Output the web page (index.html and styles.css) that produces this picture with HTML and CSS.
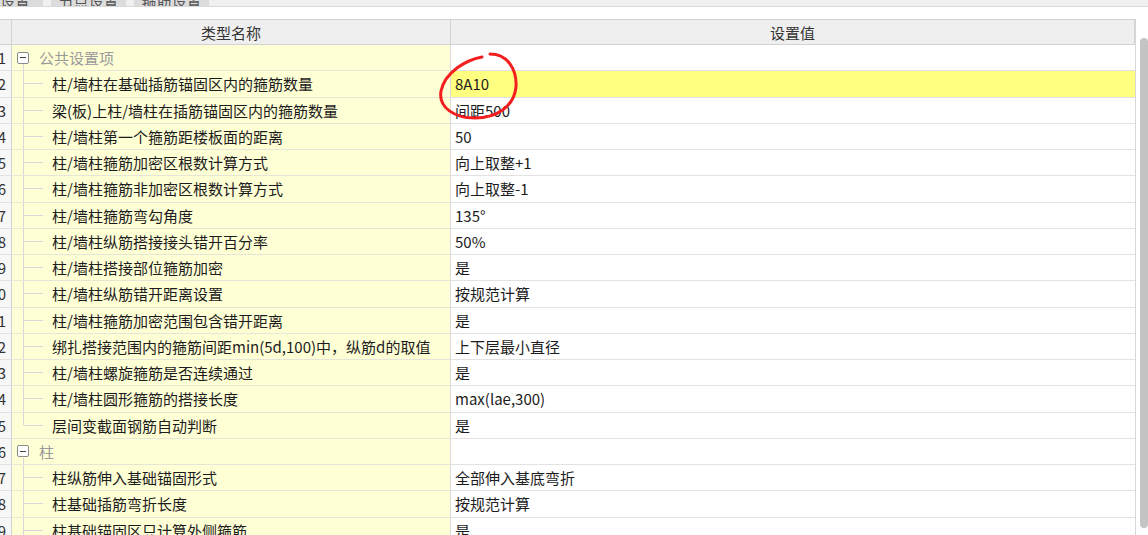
FILE: index.html
```html
<!DOCTYPE html>
<html lang="zh-CN">
<head>
  <meta charset="UTF-8">
  <title>计算设置</title>
  <link rel="stylesheet" href="styles.css">
</head>
<body>

  <div class="tabs">
    <div class="tab tab-first">计算设置</div>
    <div class="tab">节点设置</div>
    <div class="tab">箍筋设置</div>
  </div>

  <div class="table-wrap">
    <div class="grid">
      <div class="hd num"></div>
      <div class="hd">类型名称</div>
      <div class="hd">设置值</div>

      <div class="num">1</div>
      <div class="name group"><span class="toggle"></span>公共设置项</div>
      <div class="val"></div>

      <div class="num">2</div>
      <div class="name child">柱/墙柱在基础插筋锚固区内的箍筋数量</div>
      <div class="val current">8A10</div>

      <div class="num">3</div>
      <div class="name child">梁(板)上柱/墙柱在插筋锚固区内的箍筋数量</div>
      <div class="val">间距500</div>

      <div class="num">4</div>
      <div class="name child">柱/墙柱第一个箍筋距楼板面的距离</div>
      <div class="val">50</div>

      <div class="num">5</div>
      <div class="name child">柱/墙柱箍筋加密区根数计算方式</div>
      <div class="val">向上取整+1</div>

      <div class="num">6</div>
      <div class="name child">柱/墙柱箍筋非加密区根数计算方式</div>
      <div class="val">向上取整-1</div>

      <div class="num">7</div>
      <div class="name child">柱/墙柱箍筋弯勾角度</div>
      <div class="val">135°</div>

      <div class="num">8</div>
      <div class="name child">柱/墙柱纵筋搭接接头错开百分率</div>
      <div class="val">50%</div>

      <div class="num">9</div>
      <div class="name child">柱/墙柱搭接部位箍筋加密</div>
      <div class="val">是</div>

      <div class="num">10</div>
      <div class="name child">柱/墙柱纵筋错开距离设置</div>
      <div class="val">按规范计算</div>

      <div class="num">11</div>
      <div class="name child">柱/墙柱箍筋加密范围包含错开距离</div>
      <div class="val">是</div>

      <div class="num">12</div>
      <div class="name child">绑扎搭接范围内的箍筋间距min(5d,100)中，纵筋d的取值</div>
      <div class="val">上下层最小直径</div>

      <div class="num">13</div>
      <div class="name child">柱/墙柱螺旋箍筋是否连续通过</div>
      <div class="val">是</div>

      <div class="num">14</div>
      <div class="name child">柱/墙柱圆形箍筋的搭接长度</div>
      <div class="val">max(lae,300)</div>

      <div class="num">15</div>
      <div class="name child last">层间变截面钢筋自动判断</div>
      <div class="val">是</div>

      <div class="num">16</div>
      <div class="name group"><span class="toggle"></span>柱</div>
      <div class="val"></div>

      <div class="num">17</div>
      <div class="name child">柱纵筋伸入基础锚固形式</div>
      <div class="val">全部伸入基底弯折</div>

      <div class="num">18</div>
      <div class="name child">柱基础插筋弯折长度</div>
      <div class="val">按规范计算</div>

      <div class="num">19</div>
      <div class="name child">柱基础锚固区只计算外侧箍筋</div>
      <div class="val">是</div>
    </div>

    <div class="scrollbar">
      <div class="thumb"></div>
    </div>
  </div>

  <!-- hand-drawn mark around the edited value -->
  <svg class="mark" width="100" height="80" viewBox="0 0 100 80">
    <path d="M52,12 C36,15 15,27 11,46 C8,63 25,73 45,73 C66,73 84,62 86,42 C87,25 78,9 60,9"
          fill="none" stroke="#f41e1e" stroke-width="3" stroke-linecap="round"/>
  </svg>

</body>
</html>
```

FILE: styles.css
```css
body {
  margin: 0;
  font-family: "Noto Sans CJK SC", "Noto Sans", sans-serif;
  font-size: 15px;
  color: #1c1c1c;
  background-color: #fff;
  position: relative;
  height: 535px;
  overflow: hidden;
}

/* tab strip, mostly scrolled off the top */
.tabs {
  display: flex;
  gap: 8px;
  height: 7px;
  background-color: #f0f0f0;
  border-bottom: 1px solid #d9d9d9;
  box-sizing: border-box;
  margin-bottom: 12px;
  overflow: hidden;
}

.tab {
  width: 75px;
  background-color: #dcdcdc;
  display: flex;
  align-items: flex-end;
  justify-content: center;
  line-height: 11px;
  font-size: 15px;
  color: #555;
}

.tab-first {
  width: 43px;
  justify-content: flex-end;
}

.table-wrap {
  display: flex;
}

.grid {
  display: grid;
  grid-template-columns: 12px 439px 684px;
  grid-template-rows: 26px;
  grid-auto-rows: 26.25px;
}

.grid > div {
  box-sizing: border-box;
  border-bottom: 1px solid #e2e2e2;
  display: flex;
  align-items: center;
  white-space: nowrap;
  overflow: hidden;
}

.hd {
  background-color: #efefef;
  border-top: 1px solid #d2d2d2;
  border-right: 1px solid #d2d2d2;
  justify-content: center;
  color: #333;
}

.grid > .hd {
  border-bottom-color: #d2d2d2;
}

.num {
  background-color: #f7f7f7;
  border-right: 1px solid #d2d2d2;
  justify-content: flex-end;
  padding-right: 5px;
  color: #333;
}

.grid > .hd.num {
  background-color: #efefef;
}

.name {
  background-color: #ffffd6;
  border-right: 1px solid #d9d9d9;
}

.grid > .name {
  border-bottom-color: #e6e6d8;
}

.group {
  padding-left: 5px;
  color: #9a9a9a;
  background: linear-gradient(#d8d8d8, #d8d8d8) 11px 100% / 1px 6px no-repeat, #ffffd6;
}

.toggle {
  width: 12px;
  height: 12px;
  box-sizing: border-box;
  border: 1px solid #8a8a8a;
  border-radius: 2px;
  background: linear-gradient(#444, #444) center / 6px 1px no-repeat, #fff;
  margin-right: 10px;
}

.child {
  padding-left: 40px;
  background:
    linear-gradient(#d8d8d8, #d8d8d8) 11px 0 / 1px 100% no-repeat,
    linear-gradient(#d8d8d8, #d8d8d8) 12px 50% / 19px 1px no-repeat,
    #ffffd6;
}

.child.last {
  background:
    linear-gradient(#d8d8d8, #d8d8d8) 11px 0 / 1px 50% no-repeat,
    linear-gradient(#d8d8d8, #d8d8d8) 12px 50% / 19px 1px no-repeat,
    #ffffd6;
}

.val {
  padding-left: 4px;
  background-color: #fff;
}

.val.current {
  background-color: #ffff80;
}

.scrollbar {
  width: 13px;
  border-left: 1px solid #d8d8d8;
  box-sizing: border-box;
  padding: 19px 0 0 4px;
}

.thumb {
  width: 8px;
  height: 490px;
  background-color: #c4c4c4;
  border-radius: 4px;
}

.mark {
  position: absolute;
  left: 430px;
  top: 45px;
}
```
